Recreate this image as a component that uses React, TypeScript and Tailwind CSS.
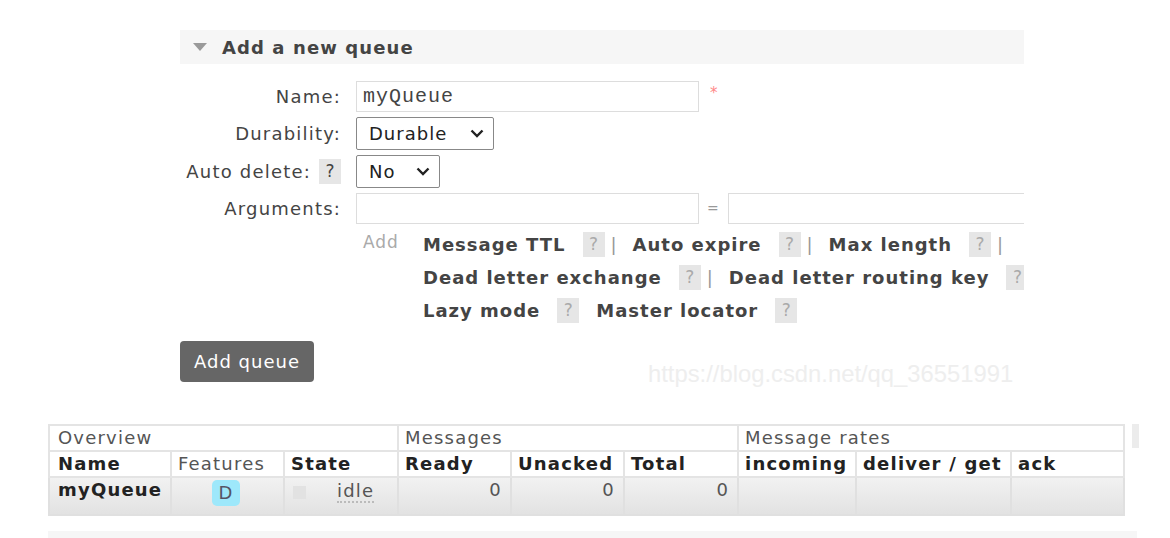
import React from "react";

const Help = ({ dark }: { dark?: boolean }) => (
  <span
    className={`inline-flex h-[25px] w-[22px] items-center justify-center bg-[#e6e6e6] text-[17px] tracking-normal ${
      dark ? "text-[#444]" : "text-[#aaa]"
    }`}
  >
    ?
  </span>
);

const Chevron = () => (
  <svg width="14" height="9" viewBox="0 0 14 9" className="ml-auto">
    <path d="M1.5 1.5 L7 7 L12.5 1.5" fill="none" stroke="#222" strokeWidth="2.4" />
  </svg>
);

const ArgLink = ({ label, bar = true }: { label: string; bar?: boolean }) => (
  <span className="inline-flex shrink-0 items-center whitespace-nowrap">
    <span className="font-bold text-[#444]">{label}</span>
    <span className="ml-[17px]">
      <Help />
    </span>
    {bar && <span className="ml-[6px] mr-[15px] text-[#999]">|</span>}
  </span>
);

export default function App() {
  const cols = [122, 113, 114, 113, 113, 114, 118, 155, 113];
  const th = "border-2 border-[#e4e4e4] px-[6px] text-left";
  const td = "border-2 border-[#e0e0e0]";
  return (
    <div
      className="relative h-[538px] w-[1170px] overflow-hidden bg-white text-[#444]"
      style={{ fontFamily: '"DejaVu Sans", Verdana, sans-serif' }}
    >
      {/* form section */}
      <div className="ml-[180px] w-[844px] overflow-hidden pt-[30px]">
        <div className="flex h-[34px] items-center bg-[#f6f6f6]">
          <svg width="14" height="8" viewBox="0 0 14 8" className="ml-[13px]">
            <path d="M0 0 H14 L7 8 Z" fill="#9a9a9a" />
          </svg>
          <span className="ml-[15px] text-[18px] font-bold tracking-[1.1px] text-[#444]">Add a new queue</span>
        </div>

        <div className="mt-[17px] grid grid-cols-[161px_1fr] items-center gap-x-[15px] gap-y-[5px] text-[18px] tracking-[1.2px]">
          <div className="text-right">Name:</div>
          <div className="flex items-center">
            <div
              className="flex h-[31px] w-[343px] items-center border border-[#ddd] pl-[6px] text-[20px] tracking-[1px] text-[#444]"
              style={{ fontFamily: '"Liberation Mono", monospace' }}
            >
              myQueue
            </div>
            <span className="ml-[11px] -mt-[6px] text-[15px] text-[#f88]">*</span>
          </div>

          <div className="text-right">Durability:</div>
          <div>
            <div className="flex h-[33px] w-[138px] items-center rounded-[2px] border border-[#888] pl-[12px] pr-[9px] tracking-[1px] text-[#222]">
              Durable
              <Chevron />
            </div>
          </div>

          <div className="flex items-center justify-end gap-[8px]">
            <span>Auto delete:</span>
            <Help dark />
          </div>
          <div>
            <div className="flex h-[33px] w-[84px] items-center rounded-[2px] border border-[#888] pl-[12px] pr-[9px] tracking-[1px] text-[#222]">
              No
              <Chevron />
            </div>
          </div>

          <div className="text-right">Arguments:</div>
          <div className="flex items-center">
            <div className="h-[31px] w-[343px] shrink-0 border border-[#ddd]" />
            <span className="mx-[8px] text-[14px] text-[#999]">=</span>
            <div className="h-[31px] w-[343px] shrink-0 border border-[#ddd]" />
          </div>
        </div>

        <div className="ml-[183px] mt-[6px] flex text-[18px] leading-[25px] tracking-[1px]">
          <span className="w-[60px] shrink-0 text-[17px] text-[#aaa]">Add</span>
          <div className="flex flex-col gap-[7px] pt-[1px]">
            <div className="flex items-center">
              <ArgLink label="Message TTL" />
              <ArgLink label="Auto expire" />
              <ArgLink label="Max length" />
            </div>
            <div className="flex items-center">
              <ArgLink label="Dead letter exchange" />
              <ArgLink label="Dead letter routing key" bar={false} />
            </div>
            <div className="flex items-center">
              <span className="font-bold">Lazy mode</span>
              <span className="ml-[17px]">
                <Help />
              </span>
              <span className="ml-[17px] font-bold">Master locator</span>
              <span className="ml-[17px]">
                <Help />
              </span>
            </div>
          </div>
        </div>

        <button className="mt-[18px] h-[41px] w-[134px] rounded-[4px] bg-[#666] text-[18px] tracking-[1px] text-white">
          Add queue
        </button>
      </div>

      <div
        className="absolute left-[648px] top-[356px] text-[23.8px] text-[#eeeeee]"
        style={{ fontFamily: '"Liberation Sans", Arial, sans-serif' }}
      >
        https://blog.csdn.net/qq_36551991
      </div>

      {/* queues table */}
      <div className="ml-[48px] mt-[42px] flex items-start">
        <table className="table-fixed border-collapse text-[18px] leading-[22px] tracking-[1.2px]" style={{ width: 1075 }}>
          <colgroup>
            {cols.map((w, i) => (
              <col key={i} style={{ width: w }} />
            ))}
          </colgroup>
          <thead>
            <tr className="h-[26px] text-[#555]">
              <th colSpan={3} className={`${th} px-[8px] font-normal`}>Overview</th>
              <th colSpan={3} className={`${th} font-normal`}>Messages</th>
              <th colSpan={3} className={`${th} font-normal`}>Message rates</th>
            </tr>
            <tr className="h-[26px] text-[#222]">
              <th className={`${th} px-[8px] font-bold`}>Name</th>
              <th className={`${th} font-normal text-[#555]`}>Features</th>
              <th className={`${th} font-bold`}>State</th>
              <th className={`${th} font-bold`}>Ready</th>
              <th className={`${th} font-bold`}>Unacked</th>
              <th className={`${th} font-bold`}>Total</th>
              <th className={`${th} font-bold`}>incoming</th>
              <th className={`${th} font-bold`}>deliver / get</th>
              <th className={`${th} font-bold`}>ack</th>
            </tr>
          </thead>
          <tbody>
            <tr className="h-[38px] bg-gradient-to-b from-[#f2f2f2] to-[#e2e2e2] align-top text-[#555]">
              <td className={`${td} px-[8px] pt-[1px] font-bold text-[#222]`}>myQueue</td>
              <td className={`${td} pr-[4px] pt-[2px] text-center`}>
                <span className="inline-flex h-[26px] w-[28px] items-center justify-center rounded-[5px] bg-[#9ee8fb] tracking-normal text-[#556]">
                  D
                </span>
              </td>
              <td className={`${td} px-[8px] pt-[3px]`}>
                <div className="flex items-center">
                  <span className="h-[13px] w-[13px] bg-[#e2e2e2]" />
                  <span className="ml-[31px] border-b-2 border-dotted border-[#bbb] leading-[20px]">idle</span>
                </div>
              </td>
              <td className={`${td} px-[8px] pt-[1px] text-right`}>0</td>
              <td className={`${td} px-[8px] pt-[1px] text-right`}>0</td>
              <td className={`${td} px-[8px] pt-[1px] text-right`}>0</td>
              <td className={td} />
              <td className={td} />
              <td className={td} />
            </tr>
          </tbody>
        </table>
        <div className="ml-[7px] h-[24px] w-[7px] bg-[#ececec]" />
      </div>

      <div className="ml-[48px] mt-[15px] h-[8px] w-[1089px] bg-[#f6f6f6]" />
    </div>
  );
}
